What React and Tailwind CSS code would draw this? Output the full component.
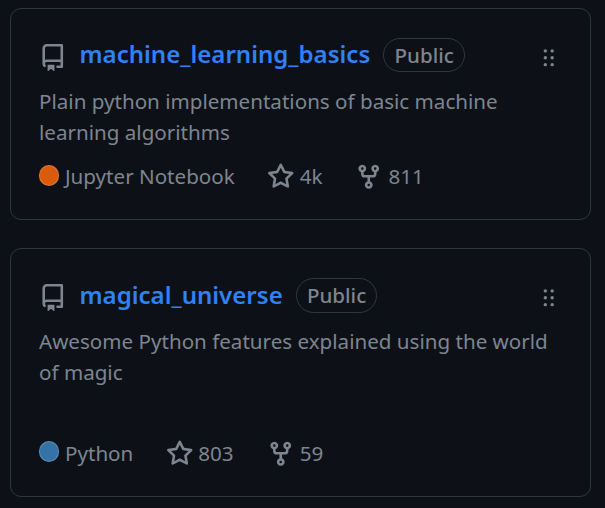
const REPO =
  "M2 2.5A2.5 2.5 0 0 1 4.5 0h8.75a.75.75 0 0 1 .75.75v12.5a.75.75 0 0 1-.75.75h-2.5a.75.75 0 0 1 0-1.5h1.75v-2h-8a1 1 0 0 0-.714 1.7.75.75 0 1 1-1.072 1.05A2.495 2.495 0 0 1 2 11.5Zm10.5-1h-8a1 1 0 0 0-1 1v6.708A2.486 2.486 0 0 1 4.5 9h8ZM5 12.25a.25.25 0 0 1 .25-.25h3.5a.25.25 0 0 1 .25.25v3.25a.25.25 0 0 1-.4.2l-1.45-1.087a.249.249 0 0 0-.3 0L5.4 15.7a.25.25 0 0 1-.4-.2Z";
const STAR =
  "M8 .25a.75.75 0 0 1 .673.418l1.882 3.815 4.21.612a.75.75 0 0 1 .416 1.279l-3.046 2.97.719 4.192a.751.751 0 0 1-1.088.791L8 12.347l-3.766 1.98a.75.75 0 0 1-1.088-.79l.72-4.194L.818 6.374a.75.75 0 0 1 .416-1.28l4.21-.611L7.327.668A.75.75 0 0 1 8 .25Zm0 2.445L6.615 5.5a.75.75 0 0 1-.564.41l-3.097.45 2.24 2.184a.75.75 0 0 1 .216.664l-.528 3.084 2.769-1.456a.75.75 0 0 1 .698 0l2.77 1.456-.53-3.084a.75.75 0 0 1 .216-.664l2.24-2.183-3.096-.45a.75.75 0 0 1-.564-.41L8 2.694Z";
const FORK =
  "M5 5.372v.878c0 .414.336.75.75.75h4.5a.75.75 0 0 0 .75-.75v-.878a2.25 2.25 0 1 1 1.5 0v.878a2.25 2.25 0 0 1-2.25 2.25h-1.5v2.128a2.251 2.251 0 1 1-1.5 0V8.5h-1.5A2.25 2.25 0 0 1 3.5 6.25v-.878a2.25 2.25 0 1 1 1.5 0ZM5 3.25a.75.75 0 1 0-1.5 0 .75.75 0 0 0 1.5 0Zm6.75.75a.75.75 0 1 0 0-1.5.75.75 0 0 0 0 1.5Zm-3 8.75a.75.75 0 1 0-1.5 0 .75.75 0 0 0 1.5 0Z";
const GRABBER =
  "M10 13a1 1 0 1 1 0-2 1 1 0 0 1 0 2Zm0-4a1 1 0 1 1 0-2 1 1 0 0 1 0 2Zm-4 4a1 1 0 1 1 0-2 1 1 0 0 1 0 2Zm5-9a1 1 0 1 1-2 0 1 1 0 0 1 2 0ZM7 8a1 1 0 1 1-2 0 1 1 0 0 1 2 0ZM6 5a1 1 0 1 1 0-2 1 1 0 0 1 0 2Z";

function Icon({ d, className }) {
  return (
    <svg viewBox="0 0 16 16" fill="currentColor" className={`shrink-0 ${className}`}>
      <path d={d} />
    </svg>
  );
}

function RepoCard({ name, title, badge, lines, language, dot, stars, forks, fork, className, footer }) {
  return (
    <article className={`flex flex-col rounded-[11px] border border-[#30363d] px-7 ${className}`}>
      <header className="flex h-[34px] items-center">
        <Icon d={REPO} className="mt-[6px] size-[27.5px]" />
        <a className={`ml-[13px] text-[24.06px] leading-[34px] font-semibold text-[#2f81f7] ${title}`}>{name}</a>
        <span className={`ml-[13px] flex items-center rounded-full border border-[#30363d] text-[20.5px] font-medium ${badge}`}>
          Public
        </span>
        <Icon d={GRABBER} className="mt-[5px] mr-0 ml-auto size-[27.5px]" />
      </header>
      <p className="mt-[14px] text-[20.6px] leading-[31px]">
        {lines.map((line) => (
          <span key={line} className="block">{line}</span>
        ))}
      </p>
      <footer className={`flex h-[31px] items-center text-[20.6px] leading-[31px] ${footer}`}>
        <span className={`h-[21px] w-5 rounded-full border border-white/20 ${dot}`} />
        <span className="ml-[6px]">{language}</span>
        <Icon d={STAR} className="mt-px ml-[32.5px] size-[27.5px]" />
        <span className="ml-[5px]">{stars}</span>
        <Icon d={FORK} className={`mt-px size-[27.5px] ${fork}`} />
        <span className="ml-[5.5px]">{forks}</span>
      </footer>
    </article>
  );
}

export default function App() {
  return (
    <main className="h-[508px] w-[605px] overflow-hidden bg-[#0d1117] pt-2 pr-[14px] pl-[10px] font-['Noto_Sans',sans-serif] whitespace-nowrap text-[#7d8590]">
      <RepoCard
        name="machine_learning_basics"
        title="mb-[2px]"
        badge="h-[34px] px-[10.3px]"
        lines={["Plain python implementations of basic machine", "learning algorithms"]}
        language="Jupyter Notebook"
        dot="mb-[3px] bg-[#da5b0b]"
        stars="4k"
        forks="811"
        fork="ml-[32.5px] mr-[0.5px]"
        className="h-[212px] pt-[29px]"
        footer="mt-[13px]"
      />
      <RepoCard
        name="magical_universe"
        title="mb-0"
        badge="h-[35px] pt-px pr-[9.8px] pl-[10.3px]"
        lines={["Awesome Python features explained using the world", "of magic"]}
        language="Python"
        dot="mb-[4px] bg-[#3572a5]"
        stars="803"
        forks="59"
        fork="ml-[33px]"
        className="mt-7 h-[249px] pt-[29px]"
        footer="mt-[50px]"
      />
    </main>
  );
}
